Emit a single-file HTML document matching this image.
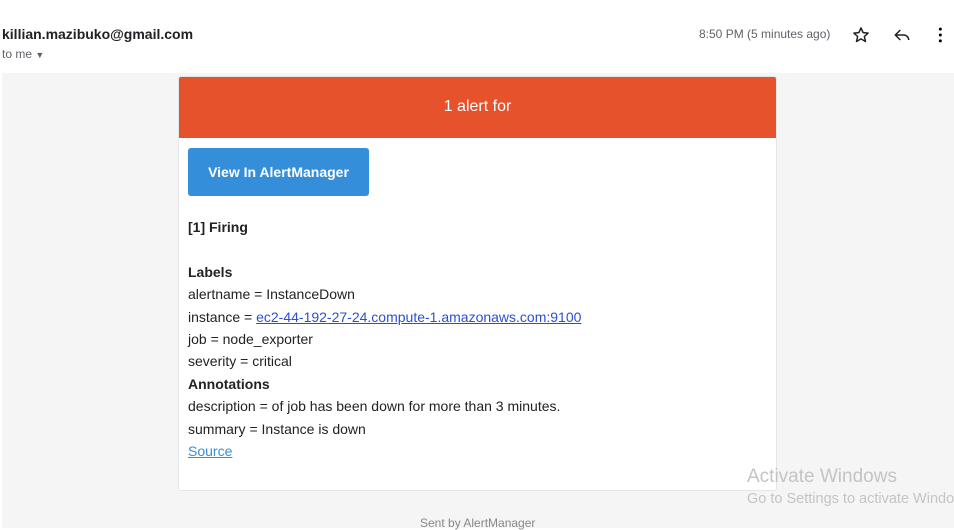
<!DOCTYPE html>
<html><head><meta charset="utf-8"><style>
body{margin:0;width:954px;height:528px;overflow:hidden;background:#fff;font-family:"Liberation Sans",Arial,sans-serif;position:relative}
.abs{position:absolute;white-space:nowrap}
.gray{position:absolute;left:2px;top:73px;width:952px;height:455px;background:#f5f5f5}
.card{position:absolute;left:178px;top:76px;width:597px;height:413px;background:#fff;border:1px solid #e6e6e6;border-radius:3px;overflow:hidden}
.hdr{height:61px;background:#e6522c;color:#fff;font-size:16px;text-align:center;line-height:59px}
.btn{position:absolute;left:9px;top:71px;width:181px;height:48px;background:#348eda;border-radius:3px;color:#fff;font-weight:bold;font-size:14px;text-align:center;line-height:48px}
.body{position:absolute;left:9px;top:139px;font-size:14px;color:#222;line-height:22.4px}
a{color:#2a4fd6}
</style></head><body>
<div class="abs" style="left:2px;top:26px;font-size:14px;font-weight:bold;color:#202124">killian.mazibuko@gmail.com</div>
<div class="abs" style="left:2px;top:47px;font-size:12px;color:#5f6368">to me <span style="font-size:9px">&#9660;</span></div>
<div class="abs" style="left:699px;top:27px;font-size:12px;color:#5f6368">8:50 PM (5 minutes ago)</div>
<svg class="abs" style="left:851px;top:25px" width="20" height="20" viewBox="0 0 24 24"><path d="M12 3.5l2.5 5.6 6.1.6-4.6 4.1 1.4 6-5.4-3.2-5.4 3.2 1.4-6-4.6-4.1 6.1-.6z" fill="none" stroke="#202124" stroke-width="1.8" stroke-linejoin="round"/></svg>
<svg class="abs" style="left:892px;top:25px" width="20" height="20" viewBox="0 0 24 24"><path d="M10 6L4 12l6 6M4 12h10a6 6 0 0 1 6 6" fill="none" stroke="#202124" stroke-width="1.8"/></svg>
<svg class="abs" style="left:932px;top:25px" width="20" height="20" viewBox="0 0 24 24"><circle cx="10" cy="5" r="1.8"/><circle cx="10" cy="12" r="1.8"/><circle cx="10" cy="19" r="1.8"/></svg>
<div class="gray"></div>
<div class="card">
<div class="hdr">1 alert for</div>
<div class="btn">View In AlertManager</div>
<div class="body">
<b>[1] Firing</b><br><br>
<b>Labels</b><br>
alertname = InstanceDown<br>
instance = <a href="#">ec2-44-192-27-24.compute-1.amazonaws.com:9100</a><br>
job = node_exporter<br>
severity = critical<br>
<b>Annotations</b><br>
description = of job has been down for more than 3 minutes.<br>
summary = Instance is down<br>
<a href="#" style="color:#348eda">Source</a>
</div>
</div>
<div class="abs" style="left:420px;top:516px;font-size:12px;color:#888">Sent by AlertManager</div>
<div class="abs" style="left:747px;top:466px;font-size:19px;color:#c4c4c4">Activate Windows</div>
<div class="abs" style="left:747px;top:491px;font-size:14.5px;color:#c4c4c4">Go to Settings to activate Windows.</div>
</body></html>
